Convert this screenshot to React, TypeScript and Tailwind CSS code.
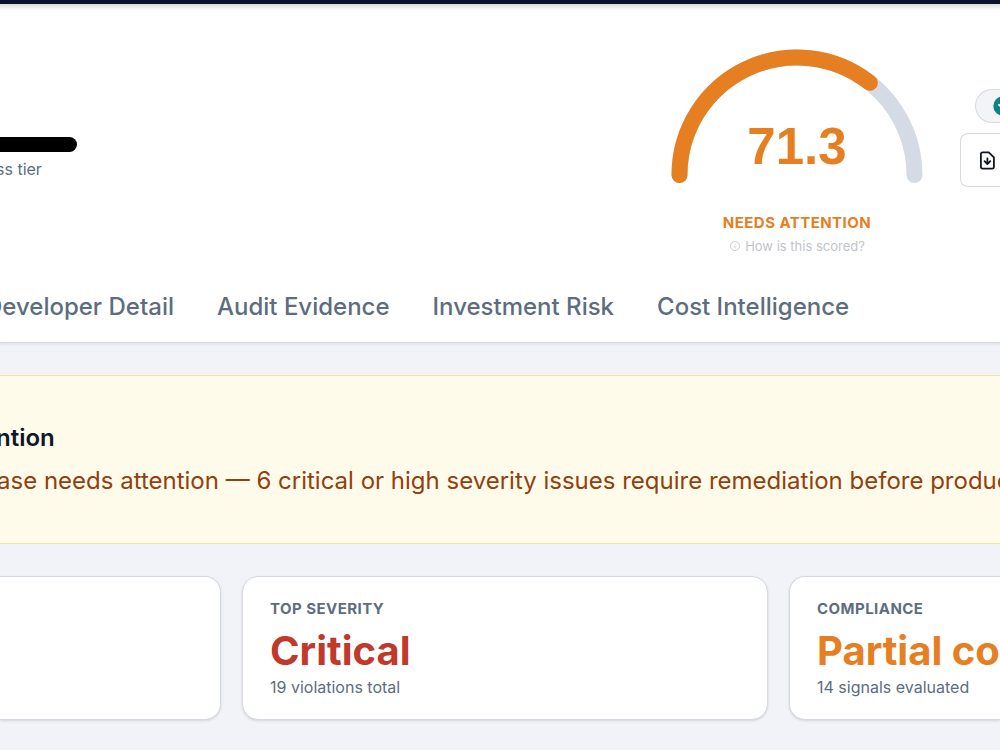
const tabs = ['Developer Detail', 'Audit Evidence', 'Investment Risk', 'Cost Intelligence'];

function ScoreGauge() {
  return (
    <div className="flex w-[252px] flex-none flex-col items-center">
      <svg viewBox="0 0 252 136" className="block w-full" role="img" aria-label="Score 71.3">
        <path d="M8.5 126a117.5 117.5 0 0 1 235 0" fill="none" stroke="#d5dbe5" strokeWidth="16" strokeLinecap="round" />
        <path
          d="M8.5 126A117.5 117.5 0 0 1 198.8 33.8"
          fill="none"
          stroke="#e67e22"
          strokeWidth="16"
          strokeLinecap="round"
        />
        <text
          x="126"
          y="115"
          textAnchor="middle"
          fill="#e67e22"
          className="font-['Liberation_Sans',Arial,sans-serif] text-[51px] font-bold"
        >
          71.3
        </text>
      </svg>
      <p className="mt-7 text-[15px] leading-5 font-bold tracking-[0.03em] text-[#e67e22]">NEEDS ATTENTION</p>
      <button type="button" className="mt-[3px] flex items-center gap-1 text-[13px] leading-5 text-[#bfc4ca]">
        <svg viewBox="0 0 12 12" className="h-3 w-3" fill="none" stroke="currentColor" aria-hidden="true">
          <circle cx="6" cy="6" r="4.5" strokeWidth="0.8" />
          <path d="M6 5.3v3M6 3.3v1" strokeWidth="0.8" />
        </svg>
        How is this scored?
      </button>
    </div>
  );
}

function HeaderActions() {
  return (
    <div className="flex w-10 flex-none flex-col gap-[10px] overflow-hidden pt-10">
      <span className="ml-[15px] flex h-[34px] items-center rounded-l-full border border-r-0 border-[#d5d9e2] bg-[#f2f4f8] pl-[17px]">
        <svg viewBox="0 0 20 20" className="h-5 w-5 flex-none" aria-hidden="true">
          <circle cx="10" cy="10" r="9.7" fill="#0d8288" />
          <path d="m6 8.8 3 3 5.5-5.5" fill="none" stroke="#fff" strokeWidth="1.8" strokeLinecap="round" />
        </svg>
      </span>
      <button
        type="button"
        aria-label="Download"
        className="flex h-[54px] items-center rounded-l-lg border border-r-0 border-[#d5d9e2] bg-white pl-[18px] text-[#0f1626]"
      >
        <svg
          viewBox="0 0 18 20"
          className="h-5 w-[18px] flex-none"
          fill="none"
          stroke="currentColor"
          strokeWidth="1.8"
          strokeLinecap="round"
          strokeLinejoin="round"
          aria-hidden="true"
        >
          <path d="M3.5 2.4h6.3l5.1 5v9.6a1.6 1.6 0 0 1-1.6 1.6H3.5a1.6 1.6 0 0 1-1.6-1.6v-13a1.6 1.6 0 0 1 1.6-1.6Z" />
          <path d="M8.4 8.3v5.6M5.5 11.2l2.9 2.9 2.9-2.9" />
        </svg>
      </button>
    </div>
  );
}

type StatProps = { label: string; value: string; note: string; tone: string };

function Stat({ label, value, note, tone }: StatProps) {
  return (
    <>
      <h3 className="text-[15px] leading-6 font-bold tracking-[0.03em] text-[#5d6d7e]">{label}</h3>
      <p className={`mt-[6px] text-[40px] leading-[48px] font-bold ${tone}`}>{value}</p>
      <p className="text-base leading-6 text-[#5d6d7e]">{note}</p>
    </>
  );
}

export default function App() {
  return (
    <div className="min-h-screen overflow-hidden bg-[#f2f3f8] font-['Inter','Liberation_Sans',sans-serif] whitespace-nowrap">
      <div className="relative h-1 bg-[#0b132b] shadow-[0_0_4px_3px_rgba(0,0,0,0.15)]" />
      <header className="border-b border-[#d5d9e2] bg-white pt-[45px] shadow-[0_1px_2px_1px_rgba(0,0,0,0.05)]">
        <div className="flex items-start">
          <div className="flex-1 pt-[88px]">
            <div className="h-[15px] w-[77px] rounded-r-full bg-black" />
            <p className="mt-[5px] -ml-1 text-base leading-6 text-[#5d6d7e]">ss tier</p>
          </div>
          <ScoreGauge />
          <div className="w-[37px] flex-none" />
          <HeaderActions />
        </div>
        <nav className="-ml-[15px] flex gap-[43px] pt-[33px] pb-[17px]">
          {tabs.map((tab) => (
            <a key={tab} href="#" className="text-2xl leading-9 font-medium text-[#5d6d7e]">
              {tab}
            </a>
          ))}
        </nav>
      </header>
      <main className="flex flex-col gap-8 py-8">
        <section className="border-y border-[#f3e59a] bg-[#fffbeb] py-11 text-2xl leading-9">
          <h2 className="-ml-1 font-semibold text-[#0f172a]">ntion</h2>
          <p className="mt-[7px] -ml-[3px] text-[#92400e]">
            ase needs attention — 6 critical or high severity issues require remediation before production
          </p>
        </section>
        <section className="grid grid-cols-[221fr_526fr_211fr] gap-[21px]">
          <div className="rounded-r-2xl border border-l-0 border-[#d5d9e2] bg-white shadow-sm" />
          <div className="min-w-0 rounded-2xl border border-[#d5d9e2] bg-white px-[27px] py-5 shadow-sm">
            <Stat label="TOP SEVERITY" value="Critical" note="19 violations total" tone="text-[#c0392b]" />
          </div>
          <div className="min-w-0 rounded-l-2xl border border-r-0 border-[#d5d9e2] bg-white py-5 pl-[27px] shadow-sm">
            <Stat label="COMPLIANCE" value="Partial compliance" note="14 signals evaluated" tone="text-[#e67e22]" />
          </div>
        </section>
      </main>
    </div>
  );
}
